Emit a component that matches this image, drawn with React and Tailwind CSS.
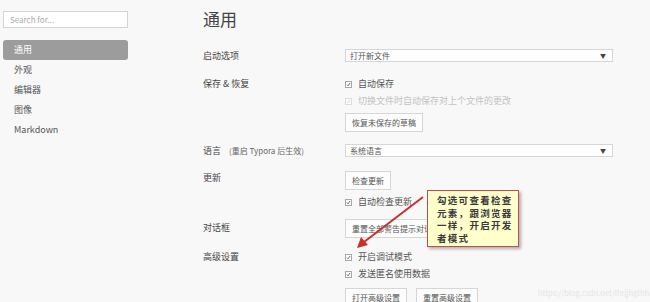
import React from 'react';

const font = { fontFamily: '"Noto Sans CJK SC", "Noto Sans", sans-serif' };

function Check({ disabled }) {
  return (
    <span className={`inline-flex items-center justify-center w-[7px] h-[7px] border ${disabled ? 'border-[#dcdcdc]' : 'border-[#a8a8a8]'} bg-white mr-[6px]`}>
      <svg viewBox="0 0 8 8" className="w-[7px] h-[7px]">
        <path d="M1.5 4.2 L3.2 6 L6.6 1.6" fill="none" stroke={disabled ? '#cfcfcf' : '#555'} strokeWidth="1.4" />
      </svg>
    </span>
  );
}

function CheckLine({ text, disabled, className = '' }) {
  return (
    <div className={`flex items-center h-[14px] text-[9px] ${disabled ? 'text-[#c2c2c2]' : 'text-[#555]'} ${className}`}>
      <Check disabled={disabled} />
      {text}
    </div>
  );
}

function Btn({ text, className = '' }) {
  return (
    <div className={`h-[19px] px-[6px] flex items-center border border-[#d6d6d6] bg-[#fcfcfc] text-[8px] text-[#555] ${className}`}>
      {text}
    </div>
  );
}

function Select({ text, className = '' }) {
  return (
    <div className={`w-[268px] h-[13px] flex items-center justify-between border border-[#d6d6d6] bg-white pl-[4px] pr-[6px] text-[8px] text-[#555] ${className}`}>
      <span>{text}</span>
      <span className="text-[6px] text-[#444]">▼</span>
    </div>
  );
}

function Row({ label, extra, lh, children, className = '' }) {
  return (
    <div className={`flex items-start ${className}`}>
      <div className={`w-[142px] shrink-0 flex items-center text-[9px] text-[#444] ${lh}`}>
        <span>{label}</span>
        {extra && <span className="ml-[8px] text-[8px] text-[#666]">{extra}</span>}
      </div>
      <div className="flex flex-col items-start">{children}</div>
    </div>
  );
}

export default function App() {
  const items = ['外观', '编辑器', '图像', 'Markdown'];
  return (
    <div className="relative w-[650px] h-[302px] bg-[#f8f8f8] flex overflow-hidden" style={font}>
      <div className="w-[131px] shrink-0 pl-[3px] pt-[11px]">
        <div className="w-[125px] h-[17px] border border-[#d4d4d4] bg-white flex items-center pl-[6px] text-[8px] text-[#aaa]">
          Search for...
        </div>
        <div className="mt-[12px] w-[125px] h-[20px] rounded-[3px] bg-[#9c9c9c] text-white text-[9px] flex items-center pl-[11px]">
          通用
        </div>
        {items.map(i => (
          <div key={i} className="h-[20px] flex items-center pl-[11px] text-[9px] text-[#555]">{i}</div>
        ))}
      </div>

      <div className="pl-[72px]">
        <div className="pt-[10px] h-[49px] text-[17px] leading-[17px] text-[#444]">通用</div>

        <Row label="启动选项" lh="h-[13px]">
          <Select text="打开新文件" />
        </Row>

        <Row label="保存 & 恢复" lh="h-[14px]" className="mt-[15px]">
          <CheckLine text="自动保存" />
          <CheckLine text="切换文件时自动保存对上个文件的更改" disabled className="mt-[3px]" />
          <Btn text="恢复未保存的草稿" className="mt-[5px]" />
        </Row>

        <Row label="语言" extra="(重启 Typora 后生效)" lh="h-[13px]" className="mt-[12px]">
          <Select text="系统语言" />
        </Row>

        <Row label="更新" lh="h-[14px]" className="mt-[14px]">
          <Btn text="检查更新" />
          <CheckLine text="自动检查更新" className="mt-[5px]" />
        </Row>

        <Row label="对话框" lh="h-[17px]" className="mt-[10px]">
          <Btn text="重置全部警告提示对话框" />
        </Row>

        <Row label="高级设置" lh="h-[14px]" className="mt-[12px]">
          <CheckLine text="开启调试模式" />
          <CheckLine text="发送匿名使用数据" className="mt-[3px]" />
          <div className="flex gap-[9px] mt-[7px]">
            <Btn text="打开高级设置" />
            <Btn text="重置高级设置" />
          </div>
        </Row>
      </div>

      <div className="absolute left-[427px] top-[190px] w-[92px] h-[57px] bg-[#ffffcc] border border-[#c0504d] shadow-[2px_2px_3px_rgba(0,0,0,0.3)] pl-[9px] pt-[3px] text-[9.5px] leading-[12.7px] tracking-[1.3px] font-bold text-[#3a3a3a]">
        <div>勾选可查看检查</div>
        <div>元素，跟浏览器</div>
        <div>一样，开启开发</div>
        <div>者模式</div>
      </div>

      <svg className="absolute left-0 top-0 pointer-events-none" width="650" height="302">
        <line x1="423" y1="197" x2="364" y2="242" stroke="#c9302c" strokeWidth="2" />
        <polygon points="357,248 361,237 368,245" fill="#c9302c" />
      </svg>

      <div className="absolute left-[538px] top-[287px] text-[7.5px] text-[#e4e4e4]">
        https://blog.csdn.net/lhrjjhgthh
      </div>
    </div>
  );
}
